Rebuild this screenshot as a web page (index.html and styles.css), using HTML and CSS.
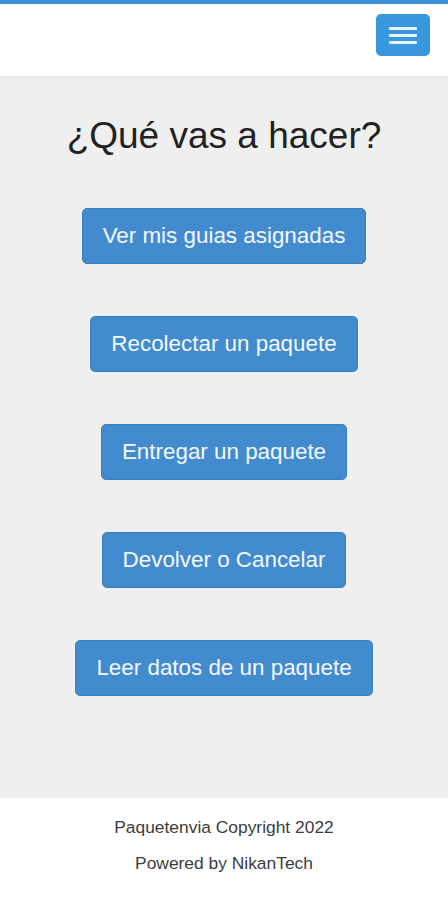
FILE: index.html
```html
<!DOCTYPE html>
<html lang="es">
<head>
  <meta charset="UTF-8">
  <meta name="viewport" content="width=device-width, initial-scale=1.0">
  <title>Paquetenvia</title>
  <link rel="stylesheet" href="styles.css">
</head>
<body>
  <div class="navbar">
    <button class="menuToggle" aria-label="Menu">
      <span class="bar"></span>
      <span class="bar"></span>
      <span class="bar"></span>
    </button>
  </div>

  <div class="content">
    <h1 class="title">¿Qué vas a hacer?</h1>
    <div class="actions">
      <a class="btn" href="#">Ver mis guias asignadas</a>
      <a class="btn" href="#">Recolectar un paquete</a>
      <a class="btn" href="#">Entregar un paquete</a>
      <a class="btn" href="#">Devolver o Cancelar</a>
      <a class="btn" href="#">Leer datos de un paquete</a>
    </div>
  </div>

  <div class="footer">
    <p>Paquetenvia Copyright 2022</p>
    <p>Powered by NikanTech</p>
  </div>
</body>
</html>
```

FILE: styles.css
```css
body {
  margin: 0;
  padding: 0;
  background: #fff;
  font-family: "Liberation Sans", Arial, sans-serif;
}
.navbar {
  border-top: 4px solid #3a8fd6;
  border-bottom: 2px solid #e6e6e6;
  box-sizing: border-box;
  height: 78px;
  padding: 10px 18px 0 0;
  display: flex;
  justify-content: flex-end;
  align-items: flex-start;
  background: #fff;
}
.menuToggle {
  width: 54px;
  height: 42px;
  padding: 0;
  border: none;
  border-radius: 5px;
  background: #3897dc;
  display: flex;
  flex-direction: column;
  align-items: center;
  justify-content: center;
  gap: 4px;
  cursor: pointer;
}
.menuToggle .bar {
  display: block;
  width: 28px;
  height: 3px;
  border-radius: 1px;
  background: #e8f4ff;
}
.content {
  background: #efefef;
  padding: 36px 0 102px;
  text-align: center;
}
.title {
  margin: 0;
  font-size: 37px;
  line-height: 44px;
  font-weight: normal;
  color: #222;
}
.actions {
  margin-top: 50px;
  display: flex;
  flex-direction: column;
  align-items: center;
  gap: 52px;
}
.btn {
  display: inline-block;
  padding: 12px 20px;
  font-size: 22.4px;
  line-height: 30px;
  color: #f4f8ff;
  text-decoration: none;
  background: #428bcf;
  border: 1px solid #3a7fc2;
  border-radius: 5px;
}
.footer {
  background: #fff;
  padding: 17px 0 0;
  text-align: center;
  color: #3d3d3d;
  font-size: 17.4px;
  line-height: 24px;
  display: flex;
  flex-direction: column;
  gap: 12px;
}
.footer p {
  margin: 0;
}
```
